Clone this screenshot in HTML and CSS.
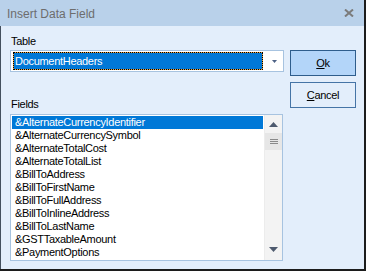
FILE: index.html
```html
<!DOCTYPE html>
<html>
<head>
<meta charset="utf-8">
<title>Insert Data Field</title>
<link rel="stylesheet" href="styles.css">
</head>
<body>
<div class="window">
  <div class="titlebar">
    <span class="title">Insert Data Field</span>
    <svg class="close" width="10" height="8" viewBox="0 0 10 8"><path d="M1 0.5 L9 7.5 M9 0.5 L1 7.5" stroke="#7b7b7b" stroke-width="2" fill="none"/></svg>
  </div>
  <div class="client">
    <div class="main">
      <div class="label label-table">Table</div>
      <div class="combo">
        <div class="combo-sel">DocumentHeaders</div>
        <div class="combo-btn"><svg width="5" height="3" viewBox="0 0 5 3"><polygon points="0,0 5,0 2.5,3" fill="#4d6185"/></svg></div>
      </div>
      <div class="label label-fields">Fields</div>
      <div class="listbox">
        <ul class="items">
          <li class="selected">&amp;AlternateCurrencyIdentifier</li>
          <li>&amp;AlternateCurrencySymbol</li>
          <li>&amp;AlternateTotalCost</li>
          <li>&amp;AlternateTotalList</li>
          <li>&amp;BillToAddress</li>
          <li>&amp;BillToFirstName</li>
          <li>&amp;BillToFullAddress</li>
          <li>&amp;BillToInlineAddress</li>
          <li>&amp;BillToLastName</li>
          <li>&amp;GSTTaxableAmount</li>
          <li>&amp;PaymentOptions</li>
        </ul>
        <div class="vscroll">
          <div class="arrow arrow-up"><svg width="9" height="5" viewBox="0 0 9 5"><polygon points="4.5,0 9,5 0,5" fill="#4e5a6e"/></svg></div>
          <div class="thumb"><span></span><span></span><span></span></div>
          <div class="track"></div>
          <div class="arrow arrow-down"><svg width="9" height="5" viewBox="0 0 9 5"><polygon points="0,0 9,0 4.5,5" fill="#4e5a6e"/></svg></div>
        </div>
      </div>
    </div>
    <div class="buttons">
      <button class="btn btn-default"><u>O</u>k</button>
      <button class="btn"><u>C</u>ancel</button>
    </div>
  </div>
</div>
</body>
</html>
```
FILE: styles.css
```css
html, body {
  margin: 0;
  padding: 0;
  background: #e3eefb;
}
.window {
  width: 366px;
  height: 271px;
  box-sizing: border-box;
  display: flex;
  flex-direction: column;
  border-right: 2px solid #1c1c1c;
  border-bottom: 2px solid #1c1c1c;
  font-family: "Liberation Sans", Arial, sans-serif;
  font-size: 11px;
  letter-spacing: -0.3px;
  color: #000;
}
.titlebar {
  height: 26px;
  flex: none;
  box-sizing: border-box;
  background: #b9d1ea;
  display: flex;
  align-items: center;
  justify-content: space-between;
  padding: 2px 10px 0 7px;
}
.title {
  font-size: 12px;
  letter-spacing: 0;
  color: #6d6d6d;
  line-height: 14px;
}
.close {
  display: block;
  margin-top: -3px;
}
.client {
  flex: 1;
  background: #e3eefb;
  border-left: 1px solid #44505e;
  display: flex;
  gap: 6px;
  padding: 0 8px 0 9px;
}
.main {
  width: 274px;
  display: flex;
  flex-direction: column;
}
.label {
  height: 13px;
  line-height: 13px;
  padding-left: 1px;
}
.label-table {
  margin-top: 9px;
}
.combo {
  margin-top: 2px;
  height: 22px;
  box-sizing: border-box;
  border: 1px solid #a7c3e0;
  background: #fff;
  display: flex;
  padding: 1px 0 1px 2px;
}
.combo-sel {
  flex: 1;
  box-sizing: border-box;
  border: 1px dotted #000;
  background: linear-gradient(#0078d7, #0078d7) padding-box, #e9a23b;
  color: #fff;
  line-height: 16px;
  padding-left: 1px;
}
.combo-btn {
  width: 20px;
  display: flex;
  align-items: center;
  padding-left: 9px;
  box-sizing: border-box;
}
.combo-btn svg {
  display: block;
}
.label-fields {
  margin-top: 26px;
}
.listbox {
  margin-top: 3px;
  width: 273px;
  height: 147px;
  box-sizing: border-box;
  border: 1px solid #a7c3e0;
  background: #fff;
  display: flex;
  padding: 1px 0 0 1px;
}
.items {
  list-style: none;
  margin: 0;
  padding: 0;
  width: 251px;
  overflow: hidden;
}
.items li {
  height: 13px;
  line-height: 13px;
  padding-left: 3px;
  white-space: nowrap;
}
.items li.selected {
  background: #0078d7;
  color: #fff;
}
.vscroll {
  margin-left: 1px;
  margin-top: -1px;
  width: 18px;
  background: #f3f3f3;
  border-left: 1px solid #ececec;
  box-sizing: border-box;
  display: flex;
  flex-direction: column;
}
.arrow {
  height: 17px;
  display: flex;
  align-items: center;
  justify-content: center;
}
.arrow svg {
  display: block;
}
.arrow-up {
  padding-top: 2px;
  box-sizing: border-box;
}
.arrow-down {
  padding-bottom: 4px;
  box-sizing: border-box;
}
.thumb {
  height: 17px;
  margin-top: 1px;
  background: #e6e6e6;
  display: flex;
  flex-direction: column;
  align-items: center;
  justify-content: center;
  gap: 1px;
}
.thumb span {
  display: block;
  width: 8px;
  height: 1px;
  background: #8a8a8a;
}
.track {
  flex: 1;
}
.buttons {
  width: 66px;
  padding-top: 24px;
  display: flex;
  flex-direction: column;
  gap: 6px;
}
.btn {
  width: 66px;
  height: 26px;
  box-sizing: border-box;
  margin: 0;
  padding: 0;
  border: 1px solid #4574a6;
  background: #e3eefb;
  font-family: "Liberation Sans", Arial, sans-serif;
  font-size: 11px;
  letter-spacing: -0.3px;
  color: #000;
  line-height: 13px;
}
.btn u {
  text-underline-offset: 1px;
}
.btn-default {
  background: #b3d5f9;
  border-color: #2e5d8c;
}
```
